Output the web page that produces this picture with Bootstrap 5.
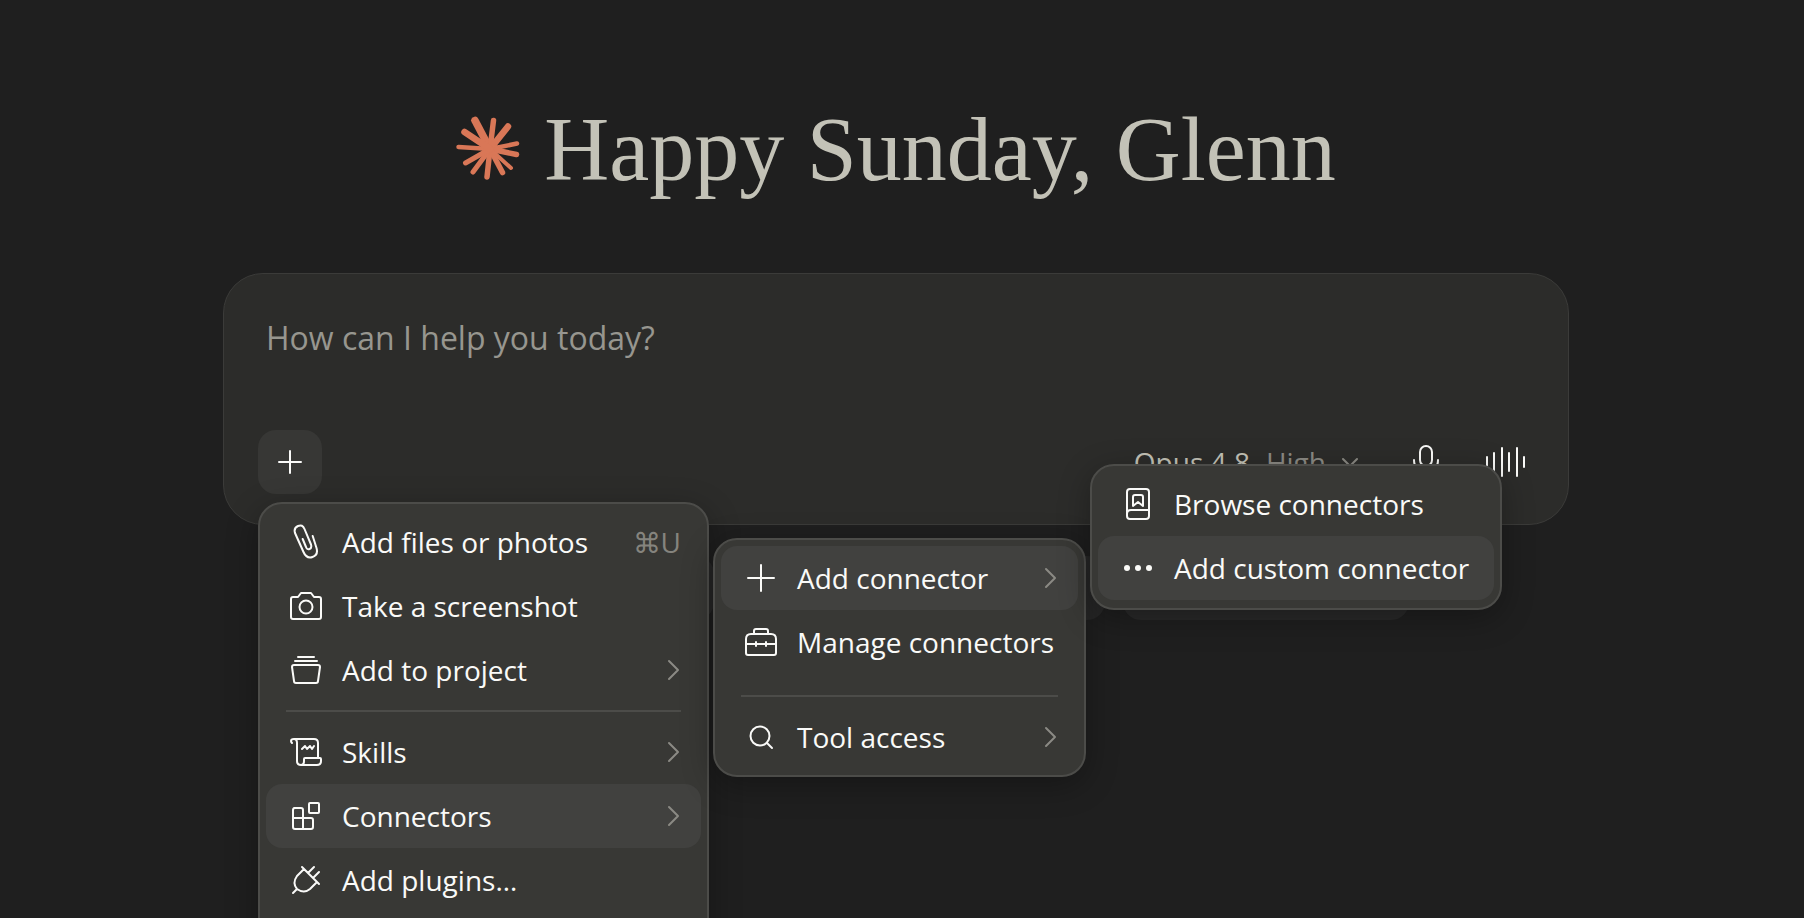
<!DOCTYPE html>
<html lang="en" data-bs-theme="dark">
<head>
<meta charset="utf-8">
<meta name="viewport" content="width=device-width, initial-scale=1">
<title>New chat</title>
<link href="https://cdn.jsdelivr.net/npm/bootstrap@5.3.0/dist/css/bootstrap.min.css" rel="stylesheet">
<script src="https://cdn.jsdelivr.net/npm/bootstrap@5.3.0/dist/js/bootstrap.bundle.min.js" defer></script>
<style>
  body { background: #1f1f1f; color: #fafaf8; font-family: "Open Sans", sans-serif; font-size: 28px; line-height: 40px; }
  .page-shell { height: 100vh; overflow: hidden; padding: 94px 12px 0 0; }
  .greeting { font-family: "Liberation Serif", serif; font-size: 90px; line-height: 104px; color: #c3c2b7; font-weight: 400; }
  .column-wide { width: 76%; max-width: 1346px; }
  .composer { background: #2c2c2a; border: 1px solid #3b3b39; border-radius: 40px; padding: 36px 30px 30px 34px; margin-top: 71px; }
  .prompt-box { font-size: 32px; line-height: 56px; height: 120px; resize: none; padding: 0 8px; color: #fafaf8; }
  .prompt-box::placeholder { color: #97968f; opacity: 1; }
  .btn { font-size: 28px; line-height: 40px; }
  .tool-btn { width: 64px; height: 64px; border-radius: 18px; color: #fafaf8; }
  .tool-btn.is-open { background: #373735; }
  .model-btn { color: #c3c2b7; gap: 16px; margin-right: 36px; }
  .model-btn .effort, .model-btn svg { color: #8b8a84; }
  .menu-panel { position: absolute; background: #383835; border: 2px solid #4c4c49; border-radius: 24px; padding: 6px; box-shadow: 0 8px 32px rgba(0,0,0,.3); }
  .menu-main { top: 72px; left: 0; width: 451px; min-height: 480px; z-index: 5; }
  .menu-connectors { top: 34px; left: 453px; width: 373px; }
  .menu-add { top: -76px; left: 375px; width: 412px; padding-bottom: 8px; }
  .menu-row { width: 100%; height: 64px; padding: 0 20px; border: 0; border-radius: 16px; gap: 16px; color: #fafaf8; text-align: left; white-space: nowrap; }
  .menu-row.is-active { background: #41413f; }
  .menu-icon { width: 40px; flex: none; }
  .menu-row kbd { background: none; color: #85847e; font: inherit; padding: 0; }
  .row-chevron { color: #8b8a84; }
  .menu-rule { height: 2px; margin: 8px 20px; background: #4c4c49; border: 0; opacity: 1; }
  .menu-rule.is-spaced { margin-top: 21px; }
  .chip-row { gap: 18px; margin-top: 31px; }
  .chip { height: 64px; border-radius: 18px; background: #292929; }
  .chip-a { width: 330px; }
  .chip-b { width: 373px; }
  .chip-c { width: 286px; }
  svg { fill: none; stroke: currentColor; stroke-width: 2; stroke-linecap: round; stroke-linejoin: round; flex: none; }
</style>
</head>
<body>
<main class="page-shell d-flex flex-column align-items-center">
  <header class="d-flex align-items-center gap-4">
    <svg width="64" height="64" viewBox="0 0 64 64" style="color:#d97757" aria-hidden="true">
      <circle cx="34" cy="33" r="8" fill="currentColor" stroke="none"/>
      <path d="M34 33L19 4.500" stroke-width="7.500"/><path d="M34 33L37.500 4.500" stroke-width="5.500"/><path d="M34 33L52 10.500" stroke-width="6.500"/><path d="M34 33L61 27.500" stroke-width="4.500"/><path d="M34 33L60.500 38.500" stroke-width="5.500"/><path d="M34 33L55 52" stroke-width="4"/><path d="M34 33L46.500 56.500" stroke-width="5.500"/><path d="M34 33L31 61" stroke-width="5.500"/><path d="M34 33L17 56" stroke-width="5"/><path d="M34 33L9.500 47" stroke-width="5"/><path d="M34 33L2.500 31" stroke-width="4.500"/><path d="M34 33L8.500 16" stroke-width="6.500"/>
    </svg>
    <h1 class="greeting m-0 pt-1">Happy Sunday, Glenn</h1>
  </header>

  <form class="composer column-wide">
    <textarea id="prompt" class="prompt-box d-block w-100 bg-transparent border-0" aria-label="Message" placeholder="How can I help you today?"></textarea>
    <div class="d-flex align-items-center">
      <div class="position-relative me-auto">
        <button type="button" class="btn tool-btn is-open p-0 d-flex align-items-center justify-content-center" aria-label="Add">
          <svg width="32" height="32" viewBox="0 0 32 32"><path d="M16 5v22M5 16h22"/></svg>
        </button>
        <div class="menu-panel menu-main">
          <button type="button" class="btn menu-row d-flex align-items-center">
            <span class="menu-icon d-flex justify-content-center"><svg width="32" height="36" viewBox="0 0 32 36"><path d="M22.700 12L26.500 24q2 7-4 9t-9-5L5 9q-1.500-5 3-7t6.500 3L21 20.500q1 3.500-1.500 4.500t-3.500-2L12.700 15"/></svg></span>
            Add files or photos<kbd class="ms-auto">⌘U</kbd>
          </button>
          <button type="button" class="btn menu-row d-flex align-items-center">
            <span class="menu-icon d-flex justify-content-center"><svg width="32" height="32" viewBox="0 0 32 32"><path d="M3 7h5l3-4h10l3 4h5q2 0 2 2v18q0 2-2 2H3q-2 0-2-2V9q0-2 2-2z"/><circle cx="16" cy="17" r="6.500"/></svg></span>
            Take a screenshot
          </button>
          <button type="button" class="btn menu-row d-flex align-items-center">
            <span class="menu-icon d-flex justify-content-center"><svg width="32" height="32" viewBox="0 0 32 32"><path d="M8 3h16M5 7h22M4 11h24q2 0 2 2l-2 14q0 2-2 2H6q-2 0-2-2L2 13q0-2 2-2z"/></svg></span>
            Add to project
            <svg class="row-chevron ms-auto" width="14" height="24" viewBox="0 0 14 24"><path d="M2 3l9 9-9 9"/></svg>
          </button>
          <hr class="menu-rule">
          <button type="button" class="btn menu-row d-flex align-items-center">
            <span class="menu-icon d-flex justify-content-center"><svg width="32" height="32" viewBox="0 0 32 32"><path d="M2 7q-1-1-1-2 0-2 3-2h20q4 0 4 4v15M4 3q3 0 3 4v18q0 4 4 4h16q4 0 4-4v-2q0-1-1-1H15q-1 0-1 1v2q0 4-3 4M12 13l3-3 2 3 3-3 2 3 2-3"/></svg></span>
            Skills
            <svg class="row-chevron ms-auto" width="14" height="24" viewBox="0 0 14 24"><path d="M2 3l9 9-9 9"/></svg>
          </button>
          <button type="button" class="btn menu-row is-active d-flex align-items-center">
            <span class="menu-icon d-flex justify-content-center"><svg width="32" height="32" viewBox="0 0 32 32"><rect x="19" y="3" width="10" height="10" rx="1"/><path d="M4 8h7q2 0 2 2v8h8q2 0 2 2v7q0 2-2 2H5q-2 0-2-2V10q0-2 2-2M3 18h10v11"/></svg></span>
            Connectors
            <svg class="row-chevron ms-auto" width="14" height="24" viewBox="0 0 14 24"><path d="M2 3l9 9-9 9"/></svg>
          </button>
          <button type="button" class="btn menu-row d-flex align-items-center">
            <span class="menu-icon d-flex justify-content-center"><svg width="32" height="32" viewBox="0 0 32 32"><path d="M12 3l17 17M14 5l-7 7q-5 7 0 13 7 5 13 0l7-7M18 9l6-6M23 14l6-6M3 29l4-4"/></svg></span>
            Add plugins…
          </button>

          <div class="menu-panel menu-connectors">
            <button type="button" class="btn menu-row is-active d-flex align-items-center">
              <span class="menu-icon d-flex justify-content-center"><svg width="32" height="32" viewBox="0 0 32 32"><path d="M16 3v26M3 16h26"/></svg></span>
              Add connector
              <svg class="row-chevron ms-auto" width="14" height="24" viewBox="0 0 14 24"><path d="M2 3l9 9-9 9"/></svg>
            </button>
            <button type="button" class="btn menu-row d-flex align-items-center">
              <span class="menu-icon d-flex justify-content-center"><svg width="32" height="32" viewBox="0 0 32 32"><path d="M9 8V5q0-2 2-2h10q2 0 2 2v3M6 8h20q5 0 5 5v14q0 2-2 2H3q-2 0-2-2V13q0-5 5-5zM1 18h30M11 16v4M21 16v4"/></svg></span>
              Manage connectors
            </button>
            <hr class="menu-rule is-spaced">
            <button type="button" class="btn menu-row d-flex align-items-center">
              <span class="menu-icon d-flex justify-content-center"><svg width="32" height="32" viewBox="0 0 32 32"><circle cx="15" cy="15" r="9.500"/><path d="M22 22l5 5"/></svg></span>
              Tool access
              <svg class="row-chevron ms-auto" width="14" height="24" viewBox="0 0 14 24"><path d="M2 3l9 9-9 9"/></svg>
            </button>

            <div class="menu-panel menu-add">
              <button type="button" class="btn menu-row d-flex align-items-center">
                <span class="menu-icon d-flex justify-content-center"><svg width="32" height="32" viewBox="0 0 32 32"><rect x="5" y="1" width="22" height="30" rx="3"/><path d="M5 26q0-4 4-4h18M11 18V9q0-2 2-2h6q2 0 2 2v9l-5-4z"/></svg></span>
                Browse connectors
              </button>
              <button type="button" class="btn menu-row is-active d-flex align-items-center">
                <span class="menu-icon d-flex justify-content-center"><svg width="32" height="32" viewBox="0 0 32 32"><g fill="currentColor" stroke="none"><circle cx="5" cy="16" r="3"/><circle cx="16" cy="16" r="3"/><circle cx="27" cy="16" r="3"/></g></svg></span>
                Add custom connector
              </button>
            </div>
          </div>
        </div>
      </div>
      <button type="button" class="btn model-btn border-0 p-0 d-flex align-items-center">Opus 4.8 <span class="effort">High</span>
        <svg width="16" height="16" viewBox="0 0 16 16"><path d="M1 5l7 7 7-7"/></svg></button>
      <button type="button" class="btn tool-btn p-0 d-flex align-items-center justify-content-center me-3" aria-label="Dictate">
        <svg width="32" height="36" viewBox="0 0 32 36"><rect x="10" y="2" width="12" height="20" rx="6"/><path d="M4 16q0 11 12 11t12-11M16 27v6"/></svg>
      </button>
      <button type="button" class="btn tool-btn p-0 d-flex align-items-center justify-content-center" aria-label="Voice mode">
        <svg width="42" height="32" viewBox="0 0 42 32"><path d="M2 11v10M9 7v18M17 2v28M24 7v18M32 2v28M39 11v10"/></svg>
      </button>
    </div>
  </form>

  <div class="chip-row d-flex justify-content-center" aria-hidden="true">
    <div class="chip chip-a"></div>
    <div class="chip chip-b"></div>
    <div class="chip chip-c"></div>
  </div>
</main>
</body>
</html>
